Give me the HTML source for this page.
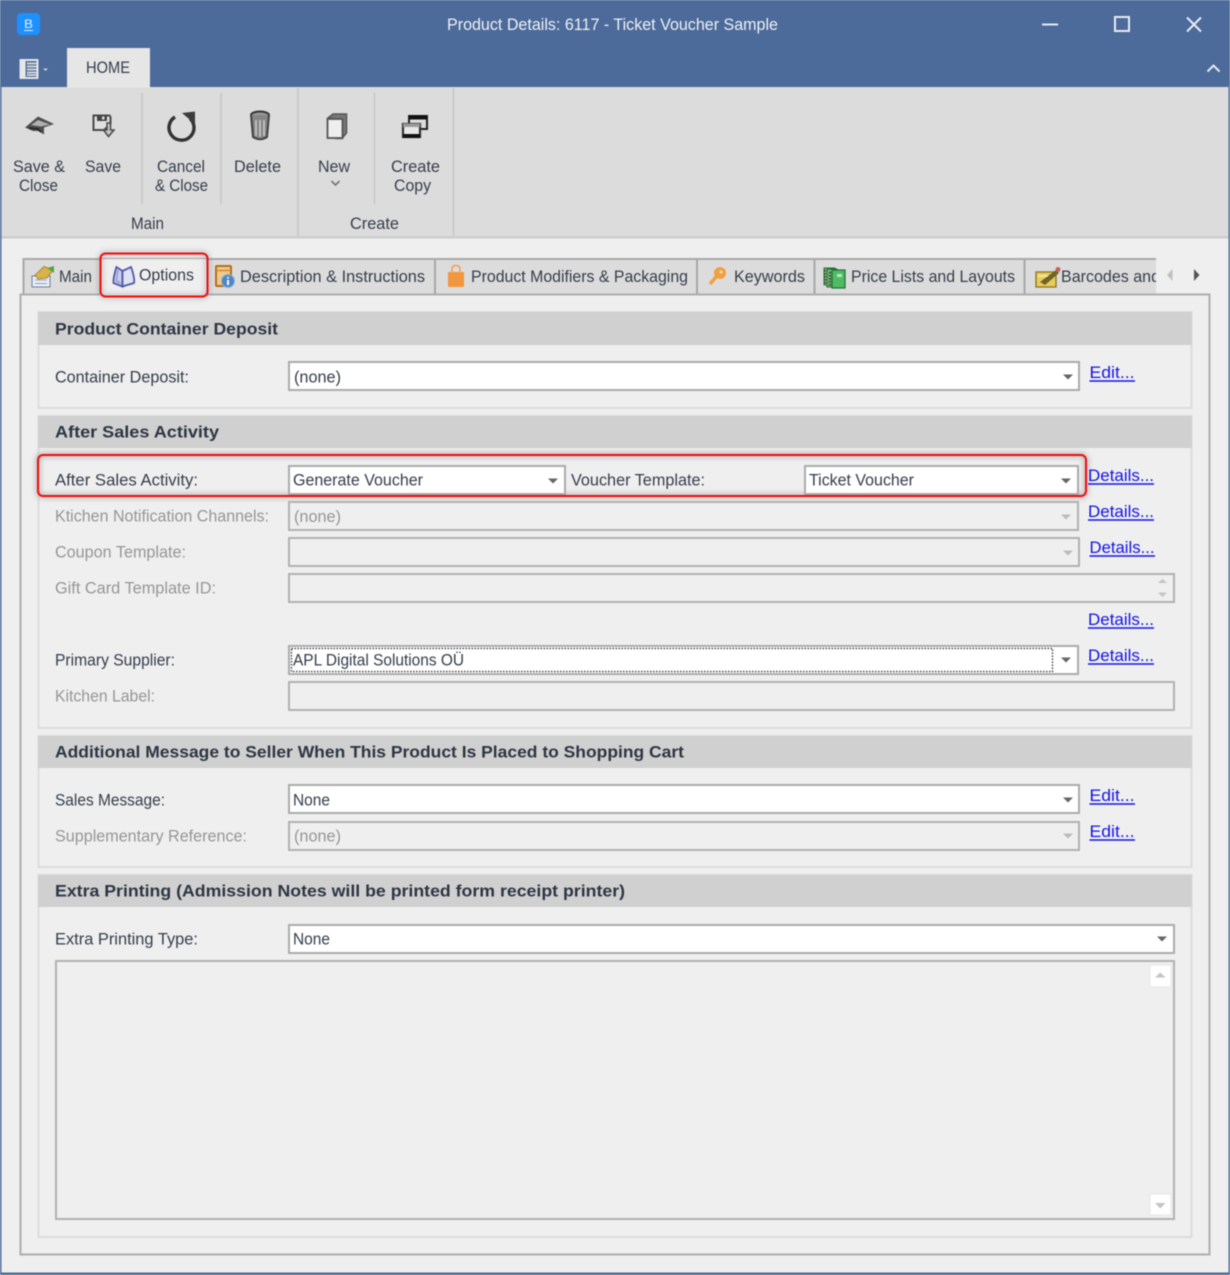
<!DOCTYPE html>
<html><head><meta charset="utf-8"><title>Product Details</title>
<style>
html,body{margin:0;padding:0;background:#efefef;width:1230px;height:1275px;overflow:hidden}
svg{display:block;filter:blur(.4px)}
text{font-family:"Liberation Sans",sans-serif;font-size:16.5px;fill:#363d4b}
.b{font-weight:bold;fill:#2e3543}
.g{fill:#969696}
.l{fill:#1414e6}
.w{fill:#eef1f6}
.f{fill:#fff;stroke:#ababab;stroke-width:2}
.d{fill:#efefef;stroke:#b2b2b2;stroke-width:2}
.gb{fill:#efefef;stroke:#dcdcdc;stroke-width:2}
.h{fill:#d0d0d0}
.sep{stroke:#cbcbcb;stroke-width:2}
.tsep{stroke:#a8a8a8;stroke-width:2}
.u{stroke:#1414e6;stroke-width:1.4}
.c text:not(.l){transform:translateY(.6px)}
</style></head><body>
<svg width="1230" height="1275" viewBox="0 0 1230 1275" xmlns="http://www.w3.org/2000/svg">
<defs>
<filter id="sh" x="-5%" y="-40%" width="110%" height="180%"><feGaussianBlur stdDeviation="3"/></filter>
<clipPath id="tc"><rect x="1030" y="258" width="126" height="36"/></clipPath>
<path id="ad" d="M-5 -2.5H5L0 2.5Z"/>
</defs>
<rect width="1230" height="1275" fill="#efefef"/>
<!-- Title bar -->
<rect width="1230" height="87" fill="#4c6a9a"/>
<rect x="0" y="0" width="1.5" height="1275" fill="#4c6a9a"/>
<rect x="1228.5" y="0" width="1.5" height="1275" fill="#4c6a9a"/>
<rect x="0" y="1272.5" width="1230" height="2.5" fill="#4c6a9a"/>
<rect x="17" y="13" width="23" height="22" rx="4" fill="#1e90ff"/>
<text x="24" y="28" style="font-size:12px;fill:#dff0ff" textLength="9" lengthAdjust="spacingAndGlyphs">B</text>
<rect x="24" y="30" width="9" height="1" fill="#dff0ff"/>
<text x="447" y="30" class="w" textLength="331" lengthAdjust="spacingAndGlyphs">Product Details: 6117 - Ticket Voucher Sample</text>
<path d="M1042 24.500H1058" stroke="#e6ebf2" stroke-width="2"/>
<rect x="1115" y="17" width="14" height="14" fill="none" stroke="#e6ebf2" stroke-width="2"/>
<path d="M1187 17.500L1201 31.500M1201 17.500L1187 31.500" stroke="#e6ebf2" stroke-width="2"/>
<path d="M1207.500 71.500L1213.500 65.500L1219.500 71.500" fill="none" stroke="#e6ebf2" stroke-width="2"/>
<!-- App menu -->
<rect x="20.500" y="60" width="17" height="18" fill="#5a7499" stroke="#f0f0f0" stroke-width="1.800"/>
<rect x="21.500" y="61" width="4" height="16" fill="#e8e8e8"/>
<path d="M27 63.500H37M27 66.500H37M27 69.500H37M27 72.500H37M27 75H37" stroke="#e6e6e6" stroke-width="1.500"/>
<path d="M43 68.500H48L45.500 71Z" fill="#c9d1de"/>
<!-- Ribbon -->
<rect x="1.500" y="87" width="1227" height="149" fill="#dcdcdc"/>
<rect x="67" y="48" width="83" height="39.500" fill="#e6e6e6"/>
<text x="86" y="73" textLength="44" lengthAdjust="spacingAndGlyphs">HOME</text>
<rect x="1.500" y="236" width="1227" height="2.500" fill="#cdcdcd"/>
<path class="sep" d="M142 93V204M221 93V204M374.500 93V204M298 88V236M453.500 88V236"/>
<!-- Save & Close icon -->
<path d="M25 127.500L38 116.500L54 124L44 127.500L44 134.500L38 131L33 131Z" fill="#4f4f4f"/>
<path d="M31 125L38 120L50 124.500L41 126.500Z" fill="#b0b0b0"/>
<path d="M29 128L38 129L41 132" stroke="#222" stroke-width="1.500" fill="none"/>
<!-- Save icon -->
<path d="M93.500 115.500H109.500L110.500 117V124L104 130H93.500Z" fill="#e0e0e0" stroke="#4a4a4a" stroke-width="2"/>
<rect x="97" y="115.500" width="10" height="5.500" fill="#444"/>
<rect x="102" y="116.500" width="2.500" height="3" fill="#ddd"/>
<path d="M107 123V130H103.500L108.500 136.500L114 130H110.500V123Z" fill="#c8c8c8" stroke="#4a4a4a" stroke-width="1.500"/>
<!-- Cancel icon -->
<path d="M175 117A12.500 12.500 0 1 0 190 118.500" fill="none" stroke="#333" stroke-width="3.400"/>
<path d="M182 113L195 111.500L195 124Z" fill="#3c3c3c"/>
<!-- Trash icon -->
<ellipse cx="260" cy="115" rx="9" ry="3.500" fill="#999" stroke="#333" stroke-width="2"/>
<path d="M251 115L253 137Q260 141.500 267 137L269 115" fill="#858585" stroke="#444" stroke-width="2"/>
<path d="M256 120V136M260 120V137M264 120V136" stroke="#d0d0d0" stroke-width="1.400"/>
<!-- New icon -->
<path d="M328 118L333 114H346.500V133L342 138.500H336V119Z" fill="#777" stroke="#555" stroke-width="1.500"/>
<rect x="327.500" y="119" width="15" height="19" fill="#eeeeee" stroke="#555" stroke-width="1.800"/>
<!-- Create Copy icon -->
<rect x="409" y="116" width="18" height="13" fill="#dcdcdc" stroke="#222" stroke-width="2"/>
<rect x="409" y="115" width="18" height="4.500" fill="#111"/>
<rect x="403" y="124" width="17" height="13" fill="#e8e8e8" stroke="#333" stroke-width="2.200"/>
<rect x="403" y="123.500" width="17" height="3.500" fill="#999"/>
<rect x="403" y="134" width="17" height="4" fill="#111"/>
<text x="13" y="172" textLength="52" lengthAdjust="spacingAndGlyphs">Save &amp;</text>
<text x="19" y="191" textLength="39" lengthAdjust="spacingAndGlyphs">Close</text>
<text x="85" y="172" textLength="36" lengthAdjust="spacingAndGlyphs">Save</text>
<text x="157" y="172" textLength="48" lengthAdjust="spacingAndGlyphs">Cancel</text>
<text x="155" y="191" textLength="53" lengthAdjust="spacingAndGlyphs">&amp; Close</text>
<text x="234" y="172" textLength="47" lengthAdjust="spacingAndGlyphs">Delete</text>
<text x="318" y="172" textLength="32" lengthAdjust="spacingAndGlyphs">New</text>
<path d="M331.500 181L335.500 185L339.500 181" fill="none" stroke="#666" stroke-width="1.500"/>
<text x="391" y="172" textLength="49" lengthAdjust="spacingAndGlyphs">Create</text>
<text x="394" y="191" textLength="37" lengthAdjust="spacingAndGlyphs">Copy</text>
<text x="131" y="229" textLength="33" lengthAdjust="spacingAndGlyphs">Main</text>
<text x="350" y="229" textLength="49" lengthAdjust="spacingAndGlyphs">Create</text>
<!-- Tabs strip -->
<rect x="23" y="259" width="1133" height="35" fill="#dcdcdc"/>
<path d="M23 259H1156" stroke="#a8a8a8" stroke-width="2"/>
<!-- Panel -->
<rect x="20.500" y="294.500" width="1189" height="960" fill="#efefef" stroke="#aeaeae" stroke-width="2"/>
<rect x="100" y="259" width="107" height="37" fill="#efefef"/>
<path class="tsep" d="M23.500 258V294M435 258V294M697 258V294M814.500 258V294M1024.500 258V294"/>
<!-- Tab icons -->
<rect x="32" y="276" width="18" height="11" fill="#e8eef6" stroke="#6b7f9c"/>
<path d="M35 280H47M35 283.500H47" stroke="#8fa3bf"/>
<path d="M35 275L44 266.500L53 270L47 278L38 279Z" fill="#d8b24a" stroke="#9b7d2a" stroke-width=".8"/>
<path d="M47 268L54 266V273Z" fill="#5aa23e"/>
<path d="M116.500 267Q113 278 113.500 283L122.500 286.500L122.500 271Z" fill="#c8cdec" stroke="#5058a8" stroke-width="1.800"/>
<path d="M131 267Q135 278 134 283L122.500 286.500L122.500 271Z" fill="#dfe2f4" stroke="#5058a8" stroke-width="1.800"/>
<path d="M118 270Q116.500 277 116.500 281L121 283" fill="none" stroke="#7f86c8"/>
<rect x="216" y="266" width="15" height="20" rx="1" fill="#f0c98a" stroke="#b66d1e" stroke-width="2"/>
<path d="M216 270.500H231" stroke="#c98a3e" stroke-width="1.500"/>
<circle cx="228" cy="281" r="6.500" fill="#4f86c6" stroke="#8fb4de"/>
<rect x="227" y="280" width="2" height="5" fill="#fff"/><rect x="227" y="277" width="2" height="1.500" fill="#fff"/>
<rect x="448" y="272" width="16" height="15" rx="1" fill="#f2963f"/>
<path d="M452 273V269Q452 265.500 456 265.500Q460 265.500 460 269V273" fill="none" stroke="#f2a65c" stroke-width="1.800"/>
<circle cx="720" cy="273" r="6" fill="#f0a040"/>
<path d="M716 277L710 284" stroke="#f0a040" stroke-width="3.500"/>
<circle cx="721" cy="272" r="1.500" fill="#fbe0b0"/>
<rect x="824" y="268" width="11" height="17" fill="#7cc07a" stroke="#2c6b3a"/>
<rect x="827" y="269" width="10" height="18" fill="#66b56c" stroke="#2c6b3a"/>
<rect x="832" y="270" width="13" height="18" fill="#4fbb62" stroke="#236b3a" stroke-width="1.200"/>
<path d="M825 270V284M830 272V286" stroke="#444" stroke-dasharray="1.500 1.500" stroke-width="2"/>
<rect x="837" y="274" width="5" height="3" fill="#b8e8c0"/>
<path d="M1036 272H1056V287H1036Z" fill="#e8cc5a" stroke="#8a7020" stroke-width="1.300"/>
<path d="M1040 282L1056 270L1059 273L1045 285Z" fill="#6f6328"/>
<circle cx="1058" cy="269.500" r="2.500" fill="#c8605a"/>
<path d="M1038 276H1048" stroke="#f8eeb0" stroke-width="1.500"/>
<text x="59" y="282" textLength="33" lengthAdjust="spacingAndGlyphs">Main</text>
<text x="139" y="280.500" textLength="55" lengthAdjust="spacingAndGlyphs">Options</text>
<text x="240" y="282" textLength="185" lengthAdjust="spacingAndGlyphs">Description &amp; Instructions</text>
<text x="471" y="282" textLength="217" lengthAdjust="spacingAndGlyphs">Product Modifiers &amp; Packaging</text>
<text x="734" y="282" textLength="71" lengthAdjust="spacingAndGlyphs">Keywords</text>
<text x="851" y="282" textLength="164" lengthAdjust="spacingAndGlyphs">Price Lists and Layouts</text>
<g clip-path="url(#tc)"><text x="1061" y="282" textLength="99" lengthAdjust="spacingAndGlyphs">Barcodes and</text></g>
<path d="M1172.500 269V281L1167 275Z" fill="#c0c0c0"/>
<path d="M1194 269V281L1199.500 275Z" fill="#555"/>
<g class="c">
<!-- Group 1 -->
<rect class="gb" x="38.500" y="312" width="1153" height="96"/>
<rect class="h" x="38" y="312" width="1154" height="33"/>
<text class="b" x="55" y="334" textLength="223" lengthAdjust="spacingAndGlyphs">Product Container Deposit</text>
<text x="55" y="382" textLength="134" lengthAdjust="spacingAndGlyphs">Container Deposit:</text>
<rect class="f" x="289" y="362" width="790" height="28"/>
<text x="294" y="382" textLength="47" lengthAdjust="spacingAndGlyphs">(none)</text>
<use href="#ad" x="1068" y="377" fill="#666"/>
<text class="l" x="1089.500" y="378" textLength="45" lengthAdjust="spacingAndGlyphs">Edit...</text>
<path class="u" d="M1089.500 381H1135"/>
<!-- Group 2 -->
<rect class="gb" x="38.500" y="416" width="1153" height="312"/>
<rect class="h" x="38" y="416" width="1154" height="32"/>
<text class="b" x="55" y="437" textLength="164" lengthAdjust="spacingAndGlyphs">After Sales Activity</text>
<rect x="38" y="455" width="1048" height="41" rx="5" fill="none" stroke="#777" stroke-width="4" filter="url(#sh)" opacity=".55"/>
<rect x="100.500" y="253.500" width="107" height="43" rx="5" fill="none" stroke="#777" stroke-width="4" filter="url(#sh)" opacity=".45"/>
<text x="55" y="485" textLength="143" lengthAdjust="spacingAndGlyphs">After Sales Activity:</text>
<rect class="f" x="289" y="466" width="276" height="28"/>
<text x="293" y="485" textLength="130" lengthAdjust="spacingAndGlyphs">Generate Voucher</text>
<use href="#ad" x="553" y="481" fill="#666"/>
<text x="571" y="485" textLength="134" lengthAdjust="spacingAndGlyphs">Voucher Template:</text>
<rect class="f" x="805" y="466" width="273" height="28"/>
<text x="809" y="485" textLength="105" lengthAdjust="spacingAndGlyphs">Ticket Voucher</text>
<use href="#ad" x="1066" y="481" fill="#666"/>
<text class="l" x="1088" y="481" textLength="66" lengthAdjust="spacingAndGlyphs">Details...</text>
<path class="u" d="M1088 484H1154"/>
<text class="g" x="55" y="521" textLength="214" lengthAdjust="spacingAndGlyphs">Ktichen Notification Channels:</text>
<rect class="d" x="289" y="502" width="789" height="28"/>
<text class="g" x="294" y="521.500" textLength="47" lengthAdjust="spacingAndGlyphs">(none)</text>
<use href="#ad" x="1066" y="517" fill="#bbb"/>
<text class="l" x="1088" y="517" textLength="66" lengthAdjust="spacingAndGlyphs">Details...</text>
<path class="u" d="M1088 520H1154"/>
<text class="g" x="55" y="557" textLength="131" lengthAdjust="spacingAndGlyphs">Coupon Template:</text>
<rect class="d" x="289" y="538" width="790" height="28"/>
<use href="#ad" x="1068" y="553" fill="#bbb"/>
<text class="l" x="1089.500" y="553" textLength="65" lengthAdjust="spacingAndGlyphs">Details...</text>
<path class="u" d="M1089.500 556H1155"/>
<text class="g" x="55" y="593" textLength="161" lengthAdjust="spacingAndGlyphs">Gift Card Template ID:</text>
<rect class="d" x="289" y="574" width="885" height="28"/>
<path d="M1158 583H1167L1162.500 579Z" fill="#c4c4c4"/>
<path d="M1158 592.500H1167L1162.500 597Z" fill="#c4c4c4"/>
<text class="l" x="1088" y="625" textLength="66" lengthAdjust="spacingAndGlyphs">Details...</text>
<path class="u" d="M1088 628H1154"/>
<text x="55" y="665" textLength="120" lengthAdjust="spacingAndGlyphs">Primary Supplier:</text>
<rect class="f" x="289" y="646" width="789" height="28"/>
<rect x="291.500" y="648.500" width="761" height="23" fill="none" stroke="#333" stroke-width="1.300" stroke-dasharray="1.500 1.500"/>
<text x="293" y="665" textLength="171" lengthAdjust="spacingAndGlyphs">APL Digital Solutions OÜ</text>
<use href="#ad" x="1066" y="660" fill="#666"/>
<text class="l" x="1088" y="661" textLength="66" lengthAdjust="spacingAndGlyphs">Details...</text>
<path class="u" d="M1088 664H1154"/>
<text class="g" x="55" y="701" textLength="100" lengthAdjust="spacingAndGlyphs">Kitchen Label:</text>
<rect class="d" x="289" y="682" width="885" height="28"/>
<!-- Group 3 -->
<rect class="gb" x="38.500" y="736" width="1153" height="131"/>
<rect class="h" x="38" y="736" width="1154" height="32"/>
<text class="b" x="55" y="757" textLength="629" lengthAdjust="spacingAndGlyphs">Additional Message to Seller When This Product Is Placed to Shopping Cart</text>
<text x="55" y="805" textLength="110" lengthAdjust="spacingAndGlyphs">Sales Message:</text>
<rect class="f" x="289" y="785" width="790" height="28"/>
<text x="293" y="805" textLength="37" lengthAdjust="spacingAndGlyphs">None</text>
<use href="#ad" x="1068" y="800" fill="#666"/>
<text class="l" x="1089.500" y="801" textLength="45" lengthAdjust="spacingAndGlyphs">Edit...</text>
<path class="u" d="M1089.500 804H1135"/>
<text class="g" x="55" y="841" textLength="192" lengthAdjust="spacingAndGlyphs">Supplementary Reference:</text>
<rect class="d" x="289" y="822" width="790" height="28"/>
<text class="g" x="294" y="841" textLength="47" lengthAdjust="spacingAndGlyphs">(none)</text>
<use href="#ad" x="1068" y="836" fill="#bbb"/>
<text class="l" x="1089.500" y="837" textLength="45" lengthAdjust="spacingAndGlyphs">Edit...</text>
<path class="u" d="M1089.500 840H1135"/>
<!-- Group 4 -->
<rect class="gb" x="38.500" y="875" width="1153" height="362"/>
<rect class="h" x="38" y="875" width="1154" height="32"/>
<text class="b" x="55" y="896" textLength="570" lengthAdjust="spacingAndGlyphs">Extra Printing (Admission Notes will be printed form receipt printer)</text>
<text x="55" y="944" textLength="143" lengthAdjust="spacingAndGlyphs">Extra Printing Type:</text>
<rect class="f" x="289" y="925" width="885" height="28"/>
<text x="293" y="944" textLength="37" lengthAdjust="spacingAndGlyphs">None</text>
<use href="#ad" x="1162" y="939" fill="#666"/>
<rect class="d" x="56" y="961" width="1118" height="258"/>
<rect x="1150" y="965" width="21" height="22" fill="#fff" stroke="#e6e6e6"/>
<path d="M1155 977.500H1165.500L1160.250 972.500Z" fill="#c4c4c4"/>
<rect x="1150" y="1194" width="21" height="21" fill="#fff" stroke="#e6e6e6"/>
<path d="M1155 1203H1165.500L1160.250 1208.500Z" fill="#c4c4c4"/>
</g>
<!-- Annotations -->
<rect x="100.500" y="253.500" width="107" height="43" rx="5" fill="none" stroke="#f20c0c" stroke-width="2"/>
<rect x="38" y="455" width="1048" height="41" rx="5" fill="none" stroke="#f20c0c" stroke-width="2"/>
</svg>
</body></html>
